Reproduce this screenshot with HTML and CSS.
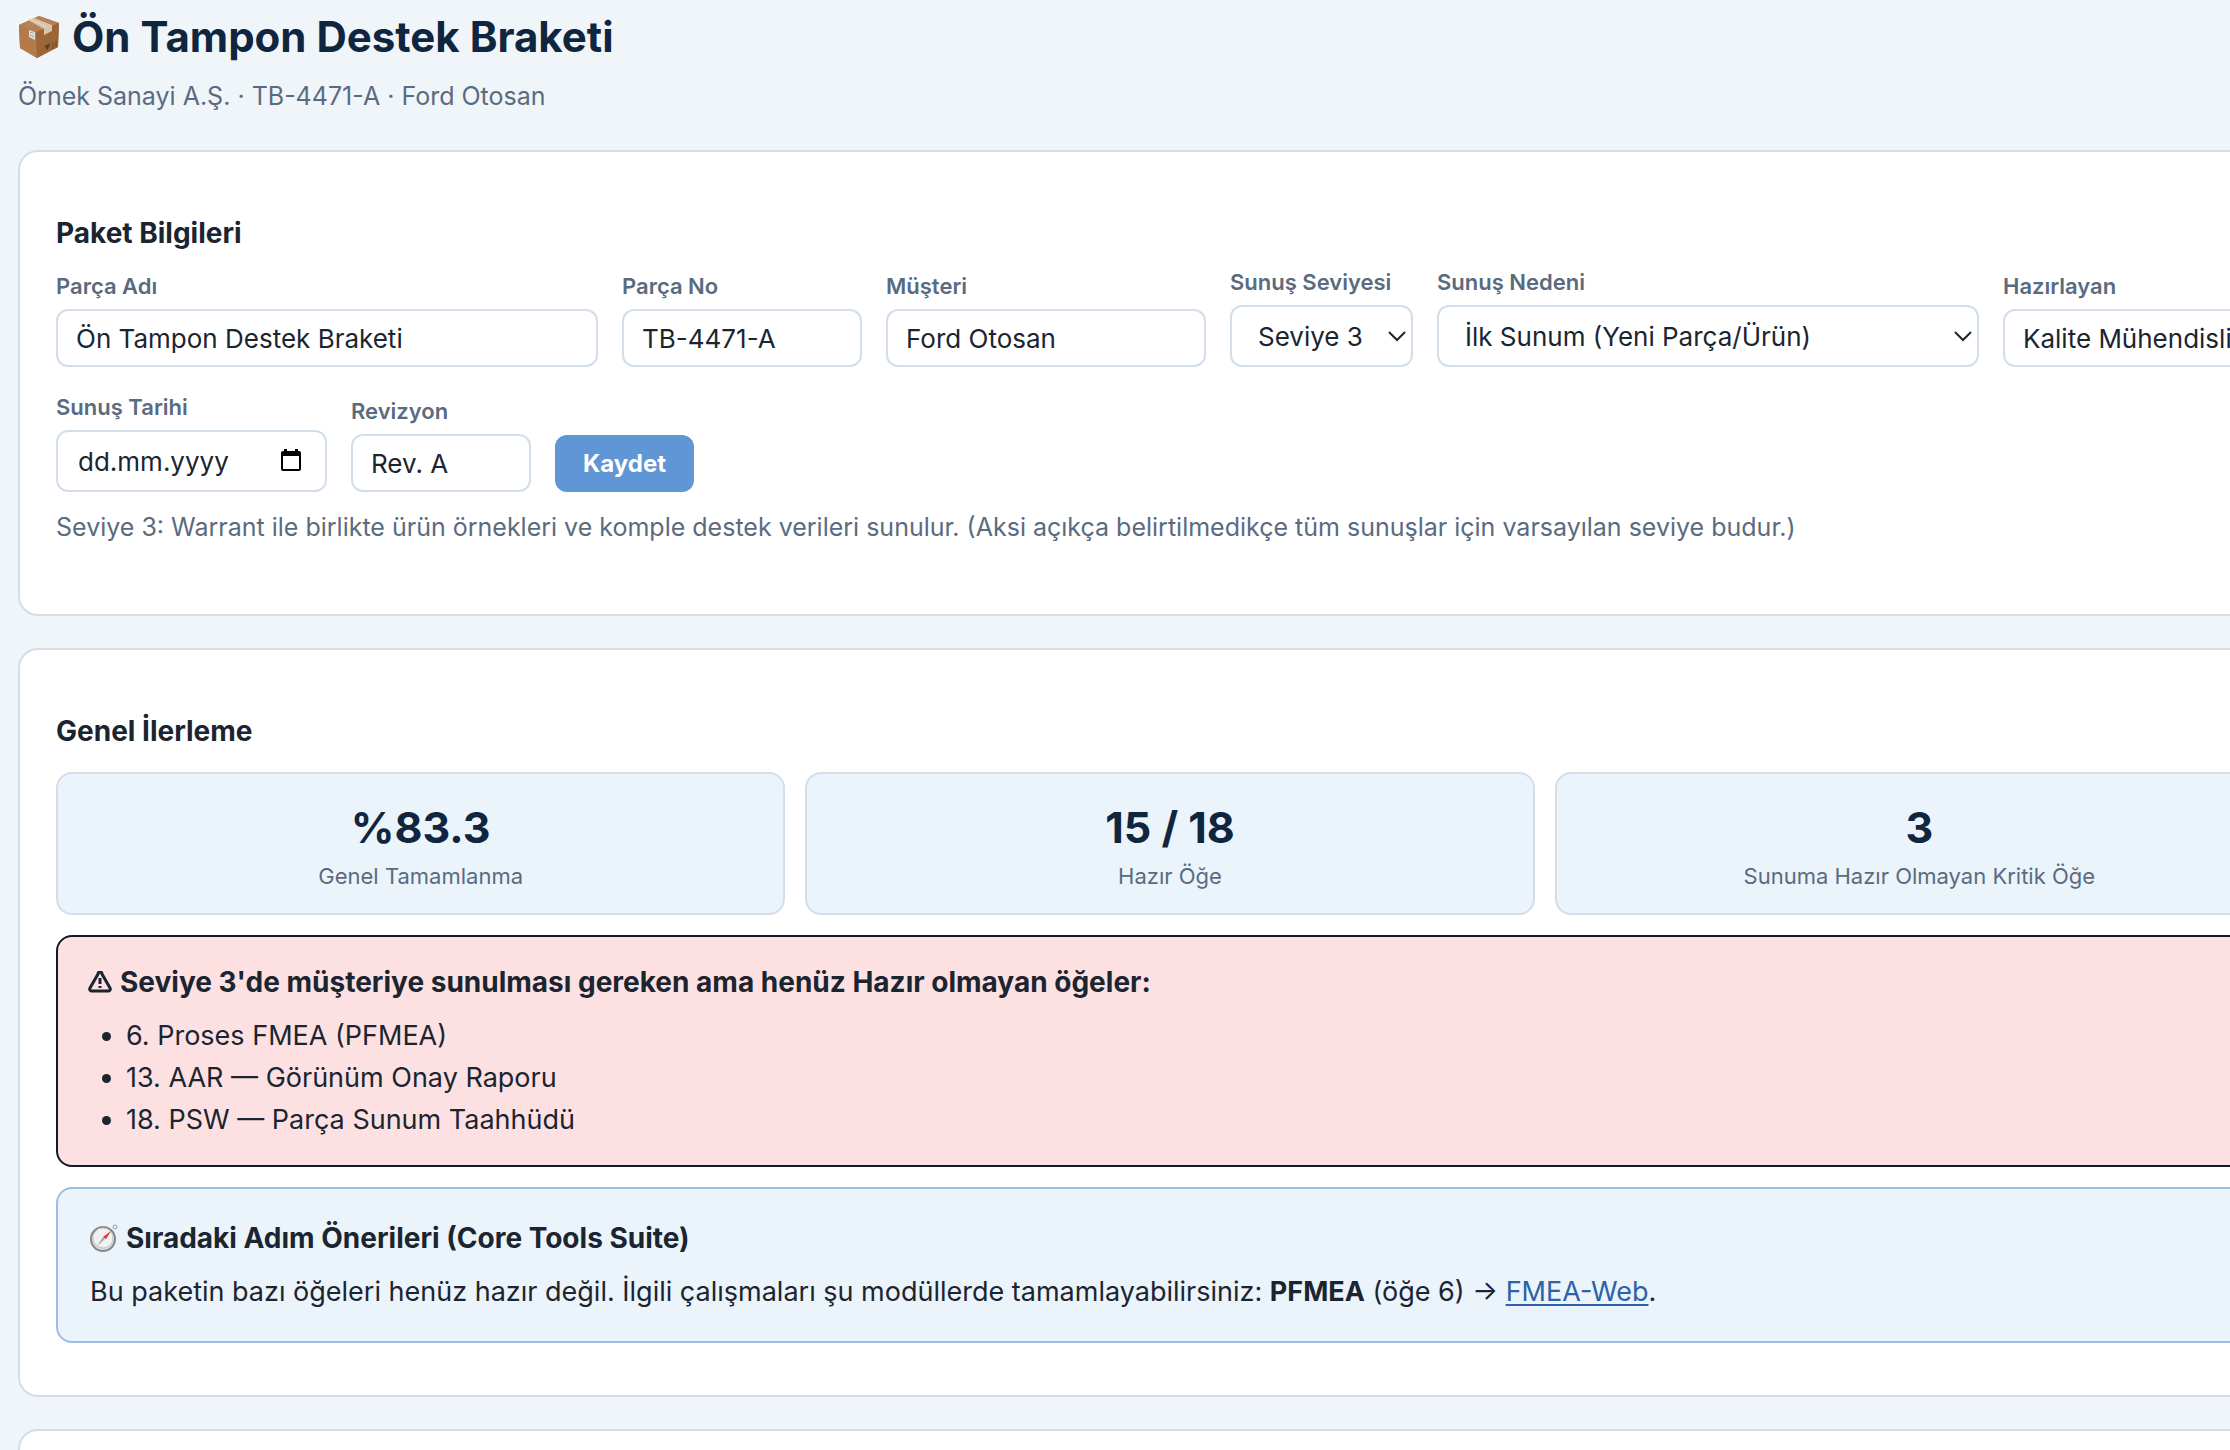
FILE: index.html
```html
<!DOCTYPE html>
<html lang="tr">
<head>
<meta charset="utf-8">
<title>Ön Tampon Destek Braketi</title>
<link rel="stylesheet" href="styles.css">
</head>
<body>
<div class="page">
  <header class="head">
    <h1>
      <svg class="box-icon" viewBox="0 0 44 44" aria-hidden="true">
        <path d="M1 10 L21 1 L41 8 L40 32 L19 43 L2 33 Z" fill="#a9713f"/>
        <path d="M1 10 L21 1 L41 8 L18 17 Z" fill="#b58257"/>
        <path d="M1 10 L18 17 L19 43 L2 33 Z" fill="#b47a4a"/>
        <path d="M18 17 L41 8 L40 32 L19 43 Z" fill="#9d6639"/>
        <path d="M10 5 L16 3 L34 10 L34 16 L26 20 L26 14 Z" fill="#d9c4ab"/>
        <path d="M12 4 L29 12" stroke="#ead9c4" stroke-width="1"/>
        <path d="M11 15 L17 17 L17 25 L11 22 Z" fill="#dfdedb"/>
        <path d="M12 17 L15 18 M12 20 L16 22" stroke="#9aa0a5" stroke-width="1"/>
        <path d="M27 31 L32 29 L29 35 Z M35 28 V34 M38 26 V32" fill="#5f3b1b" stroke="#6b4522" stroke-width="1"/>
      </svg>
      Ön Tampon Destek Braketi
    </h1>
    <p class="sub">Örnek Sanayi A.Ş. · TB-4471-A · Ford Otosan</p>
  </header>

  <section class="card">
    <h2>Paket Bilgileri</h2>
    <form class="fields">
      <div class="field w-lg">
        <label for="parca">Parça Adı</label>
        <input type="text" id="parca" value="Ön Tampon Destek Braketi">
      </div>
      <div class="field w-md">
        <label for="no">Parça No</label>
        <input type="text" id="no" value="TB-4471-A">
      </div>
      <div class="field w-customer">
        <label for="musteri">Müşteri</label>
        <input type="text" id="musteri" value="Ford Otosan">
      </div>
      <div class="field w-level">
        <label for="seviye">Sunuş Seviyesi</label>
        <div class="control">
          <select id="seviye"><option>Seviye 3</option></select>
          <svg class="chevron" viewBox="0 0 18 12" aria-hidden="true"><path d="M1 2 L9 10 L17 2"/></svg>
        </div>
      </div>
      <div class="field w-lg">
        <label for="neden">Sunuş Nedeni</label>
        <div class="control">
          <select id="neden"><option>İlk Sunum (Yeni Parça/Ürün)</option></select>
          <svg class="chevron" viewBox="0 0 18 12" aria-hidden="true"><path d="M1 2 L9 10 L17 2"/></svg>
        </div>
      </div>
      <div class="field w-author">
        <label for="hazirlayan">Hazırlayan</label>
        <input type="text" id="hazirlayan" value="Kalite Mühendisliği">
      </div>
      <div class="field w-date">
        <label for="tarih">Sunuş Tarihi</label>
        <div class="control">
          <input type="text" id="tarih" class="date" value="dd.mm.yyyy">
          <svg class="calendar" viewBox="0 0 20 22" aria-hidden="true"><path d="M3 0h3v2h8V0h3v2h1a2 2 0 0 1 2 2v16a2 2 0 0 1-2 2H2a2 2 0 0 1-2-2V4a2 2 0 0 1 2-2h1z M2 7v13h16V7z" fill-rule="evenodd"/></svg>
        </div>
      </div>
      <div class="field w-sm">
        <label for="rev">Revizyon</label>
        <input type="text" id="rev" value="Rev. A">
      </div>
      <button type="button" class="save">Kaydet</button>
    </form>
    <p class="hint">Seviye 3: Warrant ile birlikte ürün örnekleri ve komple destek verileri sunulur. (Aksi açıkça belirtilmedikçe tüm sunuşlar için varsayılan seviye budur.)</p>
  </section>

  <section class="card">
    <h2>Genel İlerleme</h2>
    <div class="stats">
      <div class="stat"><strong>%83.3</strong><span>Genel Tamamlanma</span></div>
      <div class="stat"><strong>15 / 18</strong><span>Hazır Öğe</span></div>
      <div class="stat"><strong>3</strong><span>Sunuma Hazır Olmayan Kritik Öğe</span></div>
    </div>
    <div class="alert">
      <h3>
        <svg class="warn-icon" viewBox="0 0 24 22" aria-hidden="true"><path d="M10 3 a2 2 0 0 1 4 0 L22 17 a2 2 0 0 1 -2 3 H4 a2 2 0 0 1 -2 -3 Z"/><path d="M12 7 V13 M12 15 V17"/></svg>
        Seviye 3'de müşteriye sunulması gereken ama henüz Hazır olmayan öğeler:
      </h3>
      <ul>
        <li>6. Proses FMEA (PFMEA)</li>
        <li>13. AAR — Görünüm Onay Raporu</li>
        <li>18. PSW — Parça Sunum Taahhüdü</li>
      </ul>
    </div>
    <div class="tip">
      <h3>
        <svg class="compass-icon" viewBox="0 0 28 28" aria-hidden="true">
          <circle cx="25" cy="3" r="2" fill="none" stroke="#9a9fa6" stroke-width="1"/>
          <circle cx="13" cy="15" r="12" fill="#d9dbde" stroke="#85898f" stroke-width="2"/>
          <circle cx="13" cy="14" r="10" fill="#f1f1f1" stroke="#c4c7cb" stroke-width="1"/>
          <path d="M21 7 L16 15 L13 13 Z" fill="#ee2a24"/>
          <path d="M7 22 L15 15 L13 13 Z" fill="#a5a8ac"/>
        </svg>
        Sıradaki Adım Önerileri (Core Tools Suite)
      </h3>
      <p>Bu paketin bazı öğeleri henüz hazır değil. İlgili çalışmaları şu modüllerde tamamlayabilirsiniz: <b>PFMEA</b> (öğe 6) → <a href="#">FMEA-Web</a>.</p>
    </div>
  </section>

  <section class="card"></section>
</div>
</body>
</html>
```

FILE: styles.css
```css
*{margin:0;padding:0;box-sizing:border-box;}
body{height:100vh;overflow:hidden;background:#f0f5fa;color:#1b2530;font:27px/42px Inter,"Liberation Sans",sans-serif;}

/* the page runs a little past the right edge of the window */
.page{margin-right:-92px;padding:0 0 0 18px;}

.head{padding-top:5px;margin-bottom:34px;}
h1{display:flex;align-items:center;gap:10px;font-size:42px;line-height:64px;font-weight:700;color:#10263f;}
.sub{margin-top:7px;font-size:25px;line-height:40px;color:#5a6b80;}

.card{margin-bottom:32px;padding:60px 36px 52px;min-height:120px;border:2px solid #d3deeb;border-radius:20px;background:#fff;}
h2{margin-bottom:12px;font-size:28px;line-height:42px;}
h3{display:flex;align-items:center;gap:8px;margin-bottom:12px;font-size:28px;line-height:42px;}

.fields{display:flex;flex-wrap:wrap;align-items:flex-end;gap:24px;}
.field{display:flex;flex-direction:column;gap:6px;}
.field label{font-size:22px;line-height:33px;font-weight:600;color:#5a6b80;white-space:nowrap;}
.w-lg{width:542px;}
.w-md{width:240px;}
.w-customer{width:320px;}
.w-level{width:183px;}
.w-author{width:280px;}
.w-date{width:271px;}
.w-sm{width:180px;}
input,select{display:block;width:100%;height:58px;padding:0 18px;border:2px solid #d3deeb;border-radius:12px;background:#fff;color:#1b2530;font:26px/40px Inter,"Liberation Sans",sans-serif;}
select{height:62px;padding:2px 26px 0;appearance:none;}
.date{height:62px;padding:0 20px;}
.control{position:relative;}
.chevron{position:absolute;right:7px;top:25px;width:18px;height:12px;fill:none;stroke:#1b2530;stroke-width:2;pointer-events:none;}
.calendar{position:absolute;right:26px;top:19px;width:20px;height:22px;}
.save{height:57px;padding:0 28px;border:0;border-radius:12px;background:#6095d6;color:#fff;font:700 24px/36px Inter,"Liberation Sans",sans-serif;}
.hint{margin:15px 0;font-size:25px;line-height:40px;color:#5a6b80;}

.stats{display:grid;grid-template-columns:repeat(3,1fr);gap:20px;margin-top:20px;}
.stat{padding:20px;border:2px solid #d3deeb;border-radius:16px;background:#ebf3fb;text-align:center;}
.stat strong{display:block;font-size:43px;line-height:66px;color:#10263f;}
.stat span{display:block;font-size:22px;line-height:33px;color:#5a6b80;}

.alert,.tip{margin-top:20px;border:2px solid #0f1b2d;border-radius:16px;}
.alert{padding:24px 30px;background:#fde1e2;}
.alert ul{padding-left:38px;}
.tip{padding:28px 32px;border-color:#9dbde6;background:#ebf3fb;}
.tip a{color:#2b62a8;text-underline-offset:3px;}

.box-icon{width:44px;height:44px;}
.warn-icon{width:24px;height:22px;fill:none;stroke:#1b2530;stroke-width:3;}
.compass-icon{width:28px;height:28px;}
```
